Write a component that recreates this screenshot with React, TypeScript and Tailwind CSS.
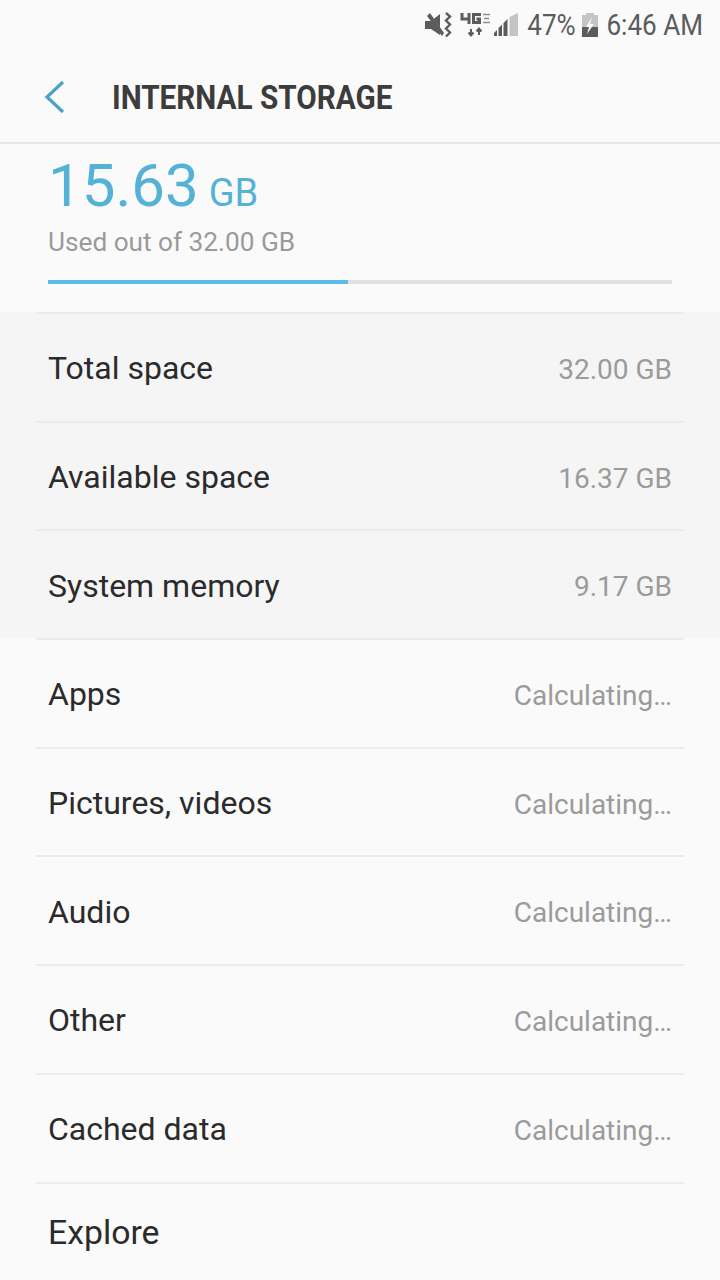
const rows: { label: string; value: string; shaded?: boolean }[] = [
  { label: "Total space", value: "32.00 GB", shaded: true },
  { label: "Available space", value: "16.37 GB", shaded: true },
  { label: "System memory", value: "9.17 GB", shaded: true },
  { label: "Apps", value: "Calculating…" },
  { label: "Pictures, videos", value: "Calculating…" },
  { label: "Audio", value: "Calculating…" },
  { label: "Other", value: "Calculating…" },
  { label: "Cached data", value: "Calculating…" },
];

function StatusIcons() {
  return (
    <>
      <svg width="28" height="26" viewBox="0 0 28 26" className="mr-[8px]">
        <path d="M1 9h6l9-7v21l-9-6H1z" fill="#5c5c5c" />
        <path d="M4 1l16 23" stroke="#fafafa" strokeWidth="2.5" />
        <path d="M6 1l14 20-2 3L3 4z" fill="#5c5c5c" />
        <path d="M22 1l4 3.5-4 4 4 4-4 4 4 4-4 4" fill="none" stroke="#5c5c5c" strokeWidth="2.4" />
      </svg>
      <svg width="32" height="26" viewBox="0 0 32 26" className="mr-[1px]">
        <path d="M2 1v6h8M9 1v11" fill="none" stroke="#5c5c5c" strokeWidth="3" />
        <path d="M21 2.5h-7.500v8h6V7h-3" fill="none" stroke="#5c5c5c" strokeWidth="3" />
        <path d="M23 2.500h7M24 6.500h5M23 10.500h7" fill="none" stroke="#8f8f8f" strokeWidth="1.600" />
        <path d="M11 17v6M8.500 20.500L11 23.500l2.500-3M19 23v-6M16.500 19.500L19 16.500l2.500 3" fill="none" stroke="#5c5c5c" strokeWidth="2" />
      </svg>
      <svg width="26" height="26" viewBox="0 0 26 26" className="mr-[10px]">
        <path d="M1 24v-3l3-3v6z" fill="#5c5c5c" />
        <path d="M5.500 24v-8l3.500-3.500V24z" fill="#5c5c5c" />
        <path d="M10.500 24V11l4-4v17z" fill="#5c5c5c" />
        <path d="M16.500 24V5L25 1v23z" fill="#c4c4c4" />
      </svg>
    </>
  );
}

function Battery() {
  return (
    <svg width="16" height="26" viewBox="0 0 16 26" className="ml-[6px] mr-[8px]">
      <path d="M4 1h8v2h4v22H0V3h4z" fill="#c4c4c4" />
      <path d="M0 15h16v10H0z" fill="#5c5c5c" />
      <path d="M10 5L4 15h3l-2 7 7-10H8z" fill="#fafafa" />
    </svg>
  );
}

export default function App() {
  return (
    <div className="w-[720px] h-[1280px] overflow-hidden bg-[#fafafa] font-['Roboto',sans-serif]">
      <div className="h-[50px] flex items-center justify-end pr-[17px] text-[#5c5c5c]">
        <StatusIcons />
        <span className="w-[47px] flex justify-end">
          <span className="text-[30px] leading-none whitespace-nowrap scale-x-[0.87] origin-right">47%</span>
        </span>
        <Battery />
        <span className="w-[97px] flex justify-end">
          <span className="text-[30px] leading-none whitespace-nowrap scale-x-[0.87] origin-right">6:46 AM</span>
        </span>
      </div>
      <div className="h-[94px] flex items-center border-b-2 border-[#e6e6e6]">
        <svg width="22" height="34" viewBox="0 0 22 34" className="ml-[44px] mt-[1px]">
          <path d="M19 2L3 17l16 15" fill="none" stroke="#4aa3c7" strokeWidth="3.2" />
        </svg>
        <h1 className="ml-[46px] text-[33px] font-bold text-[#3c3c3c] whitespace-nowrap scale-x-[0.9] origin-left leading-none mt-[2px]">
          INTERNAL STORAGE
        </h1>
      </div>
      <div className="h-[168px] px-[48px] flex flex-col">
        <div className="flex items-baseline mt-[5px] h-[74px] text-[#53b2d6]">
          <span className="text-[60px] leading-[74px]">15.63</span>
          <span className="text-[38px] ml-[10px]">GB</span>
        </div>
        <div className="text-[26.2px] leading-[32px] text-[#9a9a9a] mt-[3px]">Used out of 32.00 GB</div>
        <div className="h-[4px] mt-[22px] bg-[#e0e0e0]">
          <div className="h-full w-[300px] bg-[#5abde3]" />
        </div>
      </div>
      <div>
        {rows.map((r) => (
          <div key={r.label} className={r.shaded ? "bg-[#f5f5f5]" : ""}>
            <div className="mx-[36px] h-[108.7px] px-[12px] flex items-center justify-between border-t-2 border-[#ececec]">
              <span className="text-[32px] text-[#2b2b2b] leading-none mt-[2px]">{r.label}</span>
              <span className="text-[28px] text-[#9b9b9b] leading-none mt-[5px]">{r.value}</span>
            </div>
          </div>
        ))}
        <div className="mx-[36px] h-[98px] px-[12px] flex items-center border-t-2 border-[#ececec]">
          <span className="text-[33.8px] text-[#2b2b2b] leading-none mt-[2px]">Explore</span>
        </div>
      </div>
    </div>
  );
}
